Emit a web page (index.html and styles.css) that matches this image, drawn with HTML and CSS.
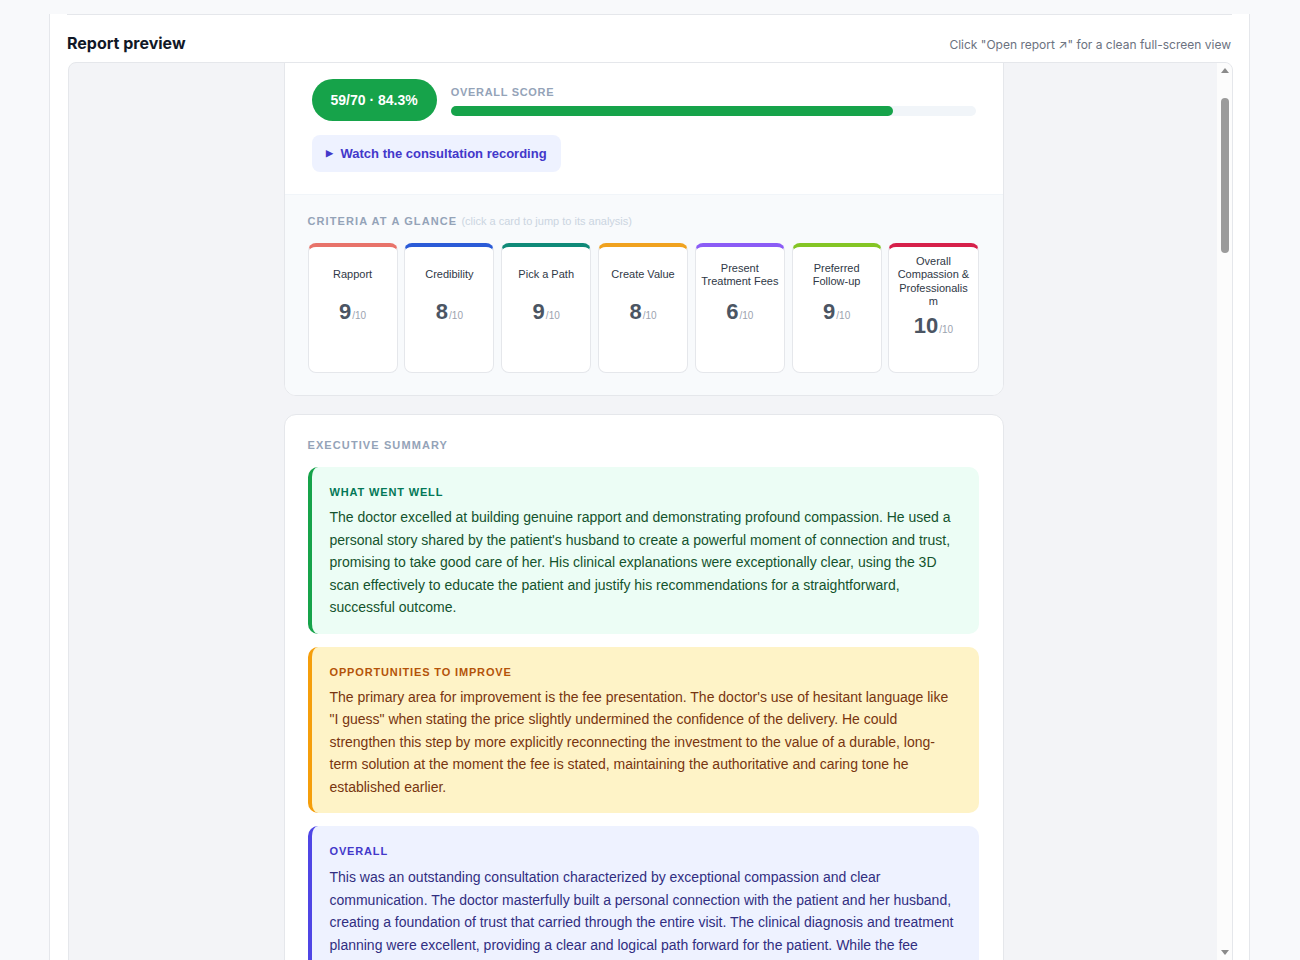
FILE: index.html
```html
<!doctype html>
<html>
<head>
<meta charset="utf-8">
<title>Report preview</title>
<link rel="stylesheet" href="styles.css">
</head>
<body>
<div class="panel">
	<hr class="divider">
	<div class="preview-head">
		<h2>Report preview</h2>
		<span class="hint">Click "Open report &#8599;" for a clean full-screen view</span>
	</div>
	<div class="frame">
		<div class="viewport">
			<div class="report">
				<section class="card card-top">
					<div class="score-area">
						<div class="score-row">
							<span class="pill">59/70 &middot; 84.3%</span>
							<div class="score-meta">
								<div class="eyebrow score-label">Overall score</div>
								<div class="bar"><div class="bar-fill" style="width: 84.2%"></div></div>
							</div>
						</div>
						<a class="watch" href="#recording"><span class="play">&#9654;</span>Watch the consultation recording</a>
					</div>
					<div class="glance">
						<div class="eyebrow">Criteria at a glance <span class="eyebrow-note">(click a card to jump to its analysis)</span></div>
						<div class="crit-grid">
							<a class="crit c-rapport" href="#rapport"><span class="crit-name">Rapport</span><span class="crit-score">9<small>/10</small></span></a>
							<a class="crit c-cred" href="#credibility"><span class="crit-name">Credibility</span><span class="crit-score">8<small>/10</small></span></a>
							<a class="crit c-path" href="#path"><span class="crit-name">Pick a Path</span><span class="crit-score">9<small>/10</small></span></a>
							<a class="crit c-value" href="#value"><span class="crit-name">Create Value</span><span class="crit-score">8<small>/10</small></span></a>
							<a class="crit c-fees" href="#fees"><span class="crit-name">Present Treatment Fees</span><span class="crit-score">6<small>/10</small></span></a>
							<a class="crit c-follow" href="#followup"><span class="crit-name">Preferred Follow-up</span><span class="crit-score">9<small>/10</small></span></a>
							<a class="crit c-overall" href="#overall"><span class="crit-name">Overall Compassion &amp; Professionalism</span><span class="crit-score">10<small>/10</small></span></a>
						</div>
					</div>
				</section>

				<section class="card summary">
					<div class="eyebrow">Executive summary</div>
					<div class="note note-good">
						<div class="note-label">What went well</div>
						<p>The doctor excelled at building genuine rapport and demonstrating profound compassion. He used a personal story shared by the patient's husband to create a powerful moment of connection and trust, promising to take good care of her. His clinical explanations were exceptionally clear, using the 3D scan effectively to educate the patient and justify his recommendations for a straightforward, successful outcome.</p>
					</div>
					<div class="note note-improve">
						<div class="note-label">Opportunities to improve</div>
						<p>The primary area for improvement is the fee presentation. The doctor's use of hesitant language like "I guess" when stating the price slightly undermined the confidence of the delivery. He could strengthen this step by more explicitly reconnecting the investment to the value of a durable, long-term solution at the moment the fee is stated, maintaining the authoritative and caring tone he established earlier.</p>
					</div>
					<div class="note note-overall">
						<div class="note-label">Overall</div>
						<p>This was an outstanding consultation characterized by exceptional compassion and clear communication. The doctor masterfully built a personal connection with the patient and her husband, creating a foundation of trust that carried through the entire visit. The clinical diagnosis and treatment planning were excellent, providing a clear and logical path forward for the patient. While the fee presentation could be more confident, the overall experience was highly professional and patient-centered.</p>
					</div>
				</section>
			</div>
		</div>
		<div class="scrollbar">
			<span class="arrow arrow-up"></span>
			<div class="track"><span class="thumb"></span></div>
			<span class="arrow arrow-down"></span>
		</div>
	</div>
</div>
</body>
</html>
```

FILE: styles.css
```css
*{margin: 0;padding: 0;box-sizing: border-box;}
html,body{
	height: 100%;
	overflow: hidden;
}
body{
	background: #f8f9fb;
	font-family: Inter, "Liberation Sans", sans-serif;
	color: #111827;
}
.panel{
	width: 1201px;
	height: 100%;
	margin-left: 49px;
	padding: 0 16px 0 17px;
	background: #ffffff;
	border-left: 1px solid #e5e7eb;
	border-right: 1px solid #e5e7eb;
}
.divider{
	border: none;
	border-top: 1px solid #e5e7eb;
	margin-top: 14px;
	margin-right: 1px;
}
.preview-head{
	display: flex;
	justify-content: space-between;
	align-items: center;
	margin: 17px 0 8px 0;
	height: 22px;
}
.preview-head h2{
	font-size: 16px;
	font-weight: 700;
	color: #111827;
}
.hint{
	font-size: 12px;
	color: #6b7280;
	padding: 2px 2px 0 0;
}

/* preview frame */
.frame{
	display: flex;
	height: 906px;
	margin-left: 1px;
	background: #f3f4f7;
	border: 1px solid #e5e7eb;
	border-radius: 8px;
	overflow: hidden;
}
.viewport{
	flex: 1;
	overflow: hidden;
	padding-left: 1px;
	font-family: "Liberation Sans", Arial, sans-serif;
}
.report{
	width: 720px;
	margin: 0 auto;
}
.scrollbar{
	width: 15px;
	display: flex;
	flex-direction: column;
	align-items: center;
	padding-bottom: 7px;
	background: #fcfcfc;
}
.arrow{
	width: 0;
	height: 0;
	margin: 5px 0;
	border-left: 4.5px solid transparent;
	border-right: 4.5px solid transparent;
}
.arrow-up{border-bottom: 5px solid #8a8a8a;}
.arrow-down{border-top: 5px solid #8a8a8a;}
.track{
	flex: 1;
	width: 100%;
	padding-top: 20px;
	display: flex;
	justify-content: center;
}
.thumb{
	width: 8px;
	height: 155px;
	border-radius: 4px;
	background: #9b9b9b;
}

/* cards */
.card{
	background: #ffffff;
	border: 1px solid #e5e7eb;
	border-radius: 12px;
	overflow: hidden;
}
.card-top{
	margin-top: -16px;
}
.score-area{
	padding: 31px 27px 22px 27px;
}
.score-row{
	display: flex;
	align-items: center;
	gap: 14px;
}
.pill{
	background: #16a34a;
	color: #ffffff;
	font-size: 14px;
	font-weight: 700;
	line-height: 18px;
	padding: 12px 19px;
	border-radius: 21px;
	white-space: nowrap;
}
.score-meta{
	flex: 1;
	padding-top: 1px;
}
.eyebrow{
	font-size: 11px;
	font-weight: 700;
	line-height: 14px;
	letter-spacing: 1.1px;
	text-transform: uppercase;
	color: #94a3b8;
}
.score-label{
	letter-spacing: 0.7px;
}
.eyebrow-note{
	font-weight: 400;
	letter-spacing: 0;
	text-transform: none;
	color: #cbd5e1;
}
.bar{
	margin-top: 7px;
	height: 10px;
	border-radius: 5px;
	background: #f1f5f9;
}
.bar-fill{
	height: 100%;
	border-radius: 5px;
	background: #16a34a;
}
.watch{
	display: inline-flex;
	align-items: center;
	margin-top: 14px;
	padding: 10px 14px 10px 14px;
	line-height: 17px;
	border-radius: 8px;
	background: #eef2ff;
	color: #4338ca;
	font-size: 13px;
	font-weight: 700;
	text-decoration: none;
}
.play{
	font-size: 9px;
	margin-right: 8px;
	margin-top: -1px;
}
.glance{
	background: #f8fafc;
	border-top: 1px solid #f1f5f9;
	padding: 19px 24px 22px 23px;
}
.crit-grid{
	margin-top: 15px;
	display: grid;
	grid-template-columns: repeat(7, 1fr);
	gap: 6.7px;
}
.crit{
	height: 130px;
	display: flex;
	flex-direction: column;
	align-items: center;
	padding: 8px 5.4px;
	background: #ffffff;
	border: 1px solid #e5e7eb;
	border-top: 4px solid;
	border-radius: 8px;
	text-decoration: none;
	text-align: center;
}
.crit-name{
	min-height: 40px;
	display: flex;
	align-items: center;
	justify-content: center;
	font-size: 11px;
	line-height: 13.4px;
	color: #2f3846;
	overflow-wrap: anywhere;
}
.crit-score{
	margin-top: 6px;
	font-size: 22px;
	font-weight: 700;
	line-height: 22px;
	color: #4b5563;
}
.crit-score small{
	font-size: 10px;
	font-weight: 400;
	color: #9ca3af;
	margin-left: 1px;
}
.c-rapport{border-top-color: #e8736a;}
.c-cred{border-top-color: #2b5bd7;}
.c-path{border-top-color: #0f8a78;}
.c-value{border-top-color: #f0a21f;}
.c-fees{border-top-color: #8b5cf6;}
.c-follow{border-top-color: #84c524;}
.c-overall{border-top-color: #d6204a;}

/* executive summary */
.summary{
	margin-top: 18px;
	padding: 23px 24px 40px 23px;
}
.note{
	margin-top: 13px;
	padding: 18px 22px 15px 18px;
	border-left: 4px solid;
	border-radius: 10px;
}
.summary .eyebrow + .note{
	margin-top: 15px;
}
.note-label{
	font-size: 11px;
	font-weight: 700;
	line-height: 14px;
	letter-spacing: 0.85px;
	text-transform: uppercase;
}
.note p{
	margin-top: 7px;
	font-size: 14px;
	line-height: 22.5px;
}
.note-overall .note-label + p{
	margin-top: 8px;
}
.note-good{
	background: #ecfdf5;
	border-left-color: #16a34a;
}
.note-good .note-label{color: #047857;}
.note-good p{color: #14532d;}
.note-improve{
	background: #fef3c7;
	border-left-color: #f59e0b;
}
.note-improve .note-label{color: #b45309;}
.note-improve p{color: #78350f;}
.note-overall{
	background: #eef2ff;
	border-left-color: #4f46e5;
}
.note-overall .note-label{color: #4338ca;}
.note-overall p{color: #312e81;}
```
